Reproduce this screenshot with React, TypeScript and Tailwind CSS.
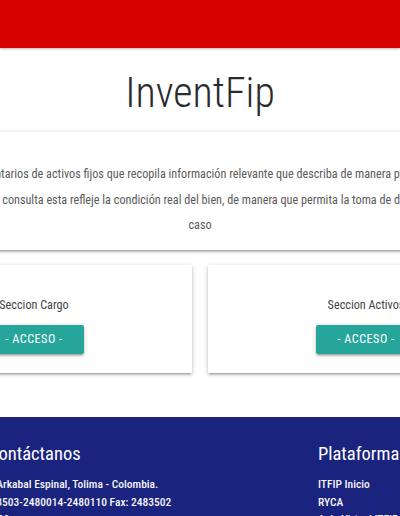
const cond = "font-['Roboto',sans-serif] [font-stretch:75%]"

const shadow =
  'shadow-[0_2px_2px_0_rgba(0,0,0,0.14),0_3px_1px_-2px_rgba(0,0,0,0.12),0_1px_5px_0_rgba(0,0,0,0.2)]'

function Seccion({ title }: { title: string }) {
  return (
    <div className={`w-[316px] shrink-0 bg-white h-[108px] pt-[30px] flex flex-col items-center ${shadow}`}>
      <p className={`${cond} text-[12.2px] leading-[20px] text-[#444]`}>{title}</p>
      <button className={`${cond} mt-[10px] h-[29px] px-[21px] bg-[#26a69a] text-white text-[12.2px] tracking-[0.5px] uppercase rounded-[2px] ${shadow}`}>
        - Acceso -
      </button>
    </div>
  )
}

export default function App() {
  return (
    <div className="w-[400px] overflow-hidden bg-white min-h-[516px]">
      <nav className="h-[48px] bg-[#d50000] shadow-[0_1px_2px_rgba(0,0,0,0.3)]" />

      <div className="h-[84px] pt-[20px] flex justify-center">
        <h1 className="font-['Roboto',sans-serif] font-light [font-stretch:85%] text-[42px] leading-[50px] text-[#2b2b2b]">
          InventFip
        </h1>
      </div>

      <div className="flex justify-center">
        <div className={`w-[648px] shrink-0 h-[118px] pt-[30px] bg-white ${shadow}`}>
          <p className={`${cond} text-[12.2px] leading-[25.5px] text-[#5a5a5a] text-center whitespace-nowrap`}>
            Sistema de inventarios de activos fijos que recopila información relevante que describa de manera precisa cada bien,
            <br />
            al momento de su consulta esta refleje la condición real del bien, de manera que permita la toma de decisiones en cada
            <br />
            caso
          </p>
        </div>
      </div>

      <div className="flex justify-center gap-4 mt-[15px]">
        <Seccion title="Seccion Cargo" />
        <Seccion title="Seccion Activos" />
      </div>

      <footer className="mt-[44px] bg-[#1a237e] h-[120px] flex justify-center">
        <div className="w-[648px] shrink-0 pt-[24px] pl-[90px] flex">
          <div className="w-[352px]">
            <h5 className={`${cond} ml-[22px] text-[18.5px] leading-[26px] text-white`}>Contáctanos</h5>
            <div className={`${cond} mt-[9px] text-[11.5px] leading-[17.7px] font-medium text-[#f5f5f5] whitespace-nowrap`}>
              <p>Barrio Arkabal Espinal, Tolima - Colombia.</p>
              <p>(8)2483503-2480014-2480110 Fax: 2483502</p>
              <p>Ext. 1000</p>
            </div>
          </div>
          <div>
            <h5 className={`${cond} text-[18.5px] leading-[26px] text-white`}>Plataforma</h5>
            <ul className={`${cond} mt-[9px] text-[11.5px] leading-[17.7px] font-medium text-[#f5f5f5] whitespace-nowrap`}>
              <li>ITFIP Inicio</li>
              <li>RYCA</li>
              <li>Aula Virtual ITFIP</li>
            </ul>
          </div>
        </div>
      </footer>
    </div>
  )
}
